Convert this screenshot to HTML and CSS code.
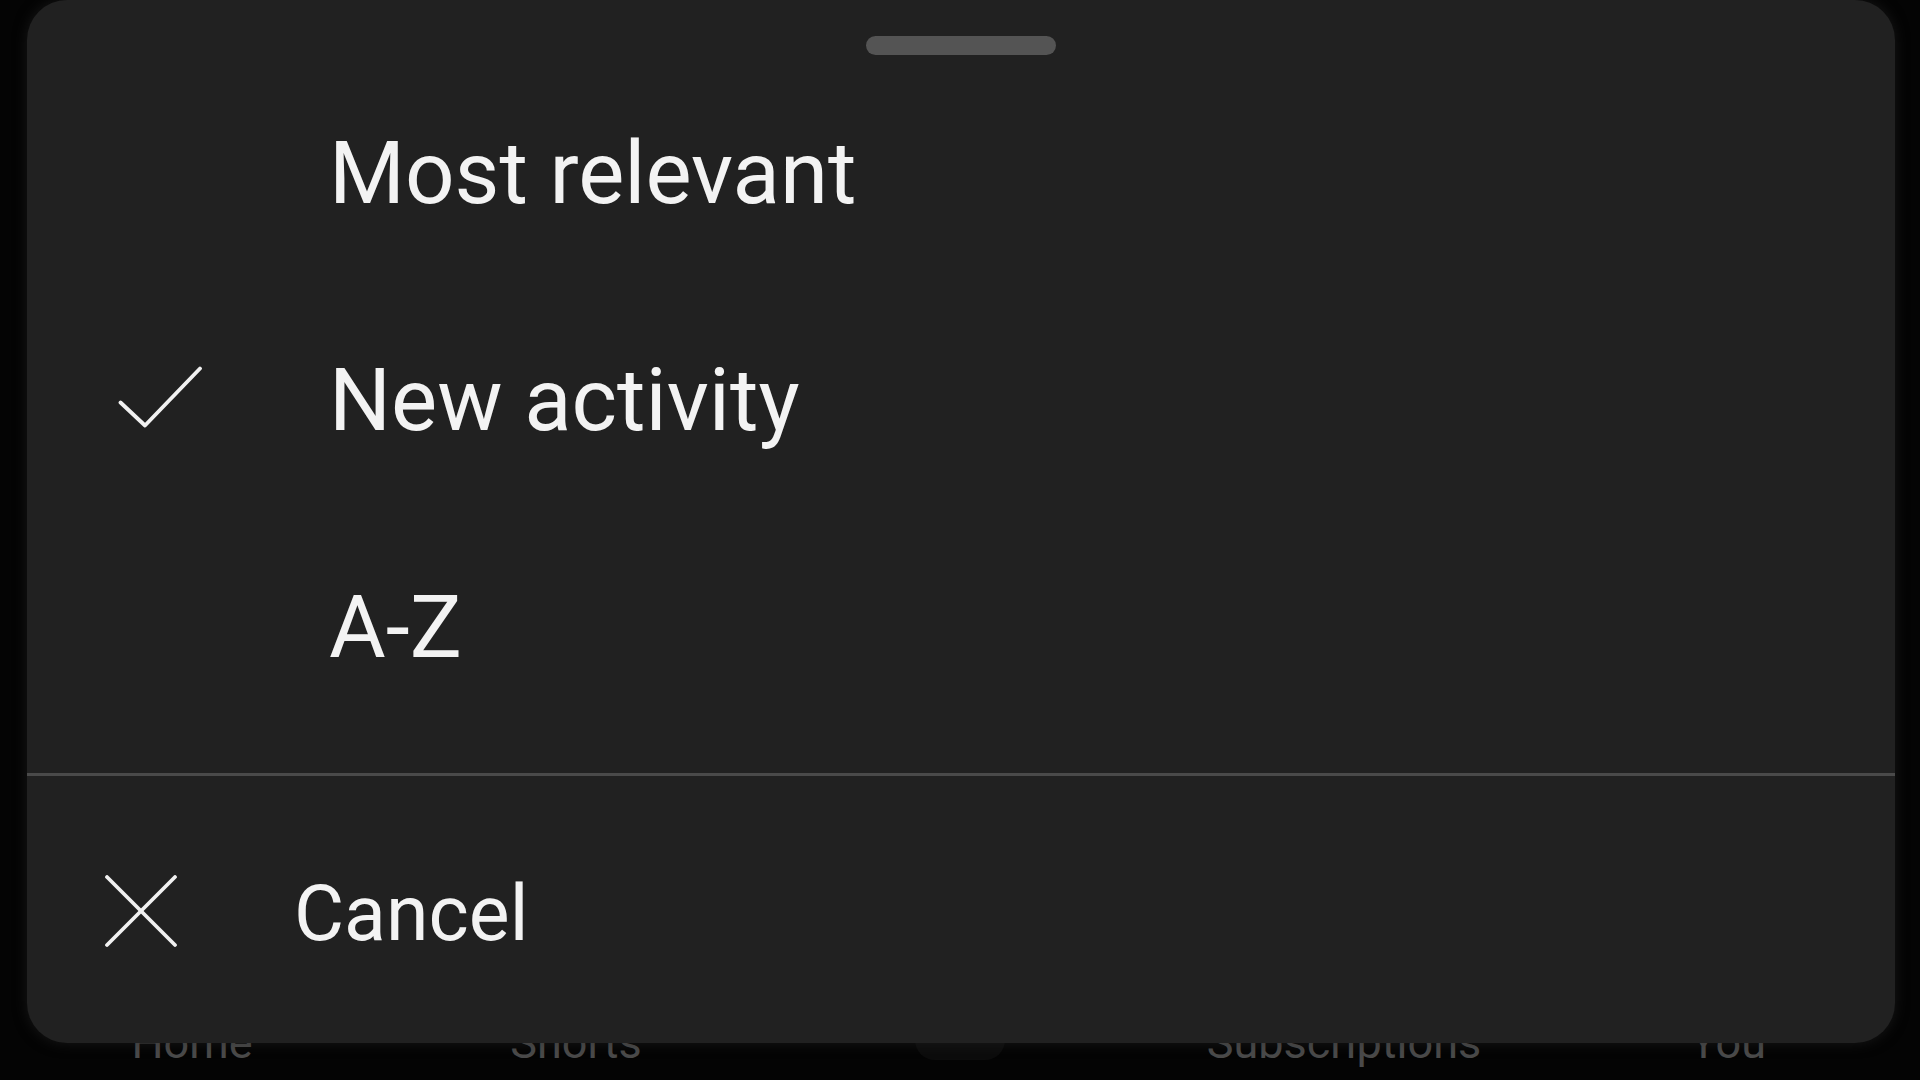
FILE: index.html
```html
<!DOCTYPE html>
<html lang="en">
<head>
  <meta charset="UTF-8">
  <meta name="viewport" content="width=device-width, initial-scale=1.0">
  <title>Sort subscriptions</title>
  <link rel="stylesheet" href="styles.css">
</head>
<body>
  <div class="screen">
    <nav class="bottom-nav">
      <span class="nav-item">Home</span>
      <span class="nav-item">Shorts</span>
      <span class="nav-item"><span class="create-btn"></span></span>
      <span class="nav-item">Subscriptions</span>
      <span class="nav-item">You</span>
    </nav>

    <div class="sheet">
      <div class="handle"></div>

      <ul class="sort-list">
        <li class="sort-item">
          <span class="icon-slot"></span>
          <span class="label">Most relevant</span>
        </li>
        <li class="sort-item selected">
          <svg class="icon-slot" viewBox="0 0 84 84">
            <polyline points="2.5,43.5 27,66.5 82,9.5" fill="none" stroke="#f1f1f1" stroke-width="3.8" stroke-linecap="round" stroke-linejoin="round"/>
          </svg>
          <span class="label">New activity</span>
        </li>
        <li class="sort-item">
          <span class="icon-slot"></span>
          <span class="label">A-Z</span>
        </li>
      </ul>

      <div class="divider"></div>

      <div class="cancel-row">
        <svg class="cancel-icon" viewBox="0 0 74 74">
          <line x1="3" y1="2" x2="71" y2="70" stroke="#f1f1f1" stroke-width="3.8" stroke-linecap="round"/>
          <line x1="71" y1="2" x2="3" y2="70" stroke="#f1f1f1" stroke-width="3.8" stroke-linecap="round"/>
        </svg>
        <span class="cancel-label">Cancel</span>
      </div>
    </div>
  </div>
</body>
</html>
```

FILE: styles.css
```css
:root {
  --bg: #040404;
  --sheet: #212121;
  --text: #f3f3f3;
  --handle: #545454;
  --divider: #4a4a4a;
  --nav-text: #4a4a4a;
}
* { box-sizing: border-box; margin: 0; padding: 0; }
body {
  font-family: Roboto, "Liberation Sans", Arial, sans-serif;
  background: var(--bg);
  color: var(--text);
  width: 1920px;
  height: 1080px;
  overflow: hidden;
}
.screen {
  position: relative;
  height: 1080px;
  display: flex;
  flex-direction: column;
  justify-content: flex-end;
}

/* nav bar behind the sheet, mostly covered */
.bottom-nav {
  height: 60px;
  display: grid;
  grid-template-columns: repeat(5, 1fr);
  align-items: start;
}
.nav-item {
  text-align: center;
  font-size: 45px;
  line-height: 45px;
  color: var(--nav-text);
}
.create-btn {
  display: inline-block;
  width: 90px;
  height: 40px;
  border-radius: 20px;
  background: #0c0c0c;
}

/* bottom sheet overlay */
.sheet {
  position: absolute;
  top: 0;
  left: 27px;
  right: 25px;
  height: 1043px;
  background: var(--sheet);
  border-radius: 40px;
  display: flex;
  flex-direction: column;
  box-shadow: 0 0 14px rgba(40,40,40,0.5);
}
.handle {
  width: 190px;
  height: 19px;
  margin: 36px auto 0;
  border-radius: 10px;
  background: var(--handle);
}
.sort-list {
  list-style: none;
  margin-top: 5px;
}
.sort-item {
  height: 227px;
  display: flex;
  align-items: center;
  padding-left: 91px;
}
.icon-slot {
  width: 84px;
  height: 84px;
  flex-shrink: 0;
  margin-right: 127px;
}
.label {
  font-size: 87px;
  line-height: 227px;
  white-space: nowrap;
}
.divider {
  height: 3px;
  margin-top: 32px;
  background: var(--divider);
}
.cancel-row {
  display: flex;
  align-items: center;
  padding: 93px 0 0 77px;
}
.cancel-icon {
  width: 74px;
  height: 74px;
  flex-shrink: 0;
  margin-right: 116px;
  margin-top: -4px;
}
.cancel-label {
  font-size: 77px;
  line-height: 90px;
}
```
